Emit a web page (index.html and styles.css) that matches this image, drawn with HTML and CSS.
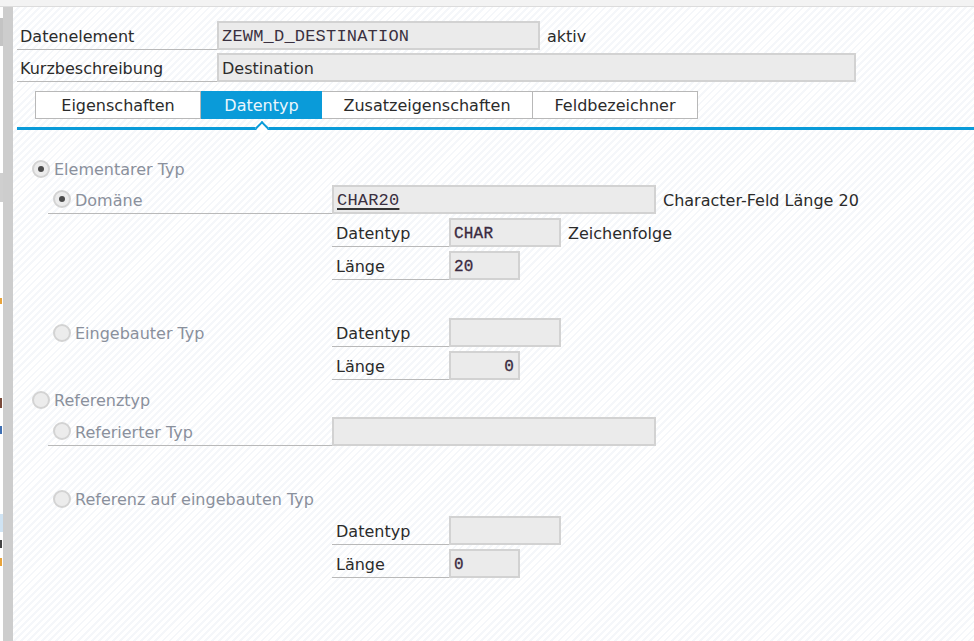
FILE: index.html
```html
<!DOCTYPE html>
<html lang="de">
<head>
<meta charset="utf-8">
<title>Datenelement ZEWM_D_DESTINATION</title>
<link rel="stylesheet" href="styles.css">
</head>
<body>
<div class="topbar"></div>
<div class="page">
  <div class="edge">
    <div class="frags">
      <div class="frag f1"></div>
      <div class="frag f2"></div>
      <div class="frag f3"></div>
      <div class="frag f4"></div>
      <div class="frag f5"></div>
      <div class="frag f6"></div>
      <div class="frag f7"></div>
      <div class="frag f8"></div>
    </div>
    <div class="edgebar"></div>
  </div>
  <main class="main">
    <div class="head">
      <div class="hrow">
        <div class="hlabel">Datenelement</div>
        <div class="field mono w323">ZEWM_D_DESTINATION</div>
        <span class="after">aktiv</span>
      </div>
      <div class="hrow">
        <div class="hlabel">Kurzbeschreibung</div>
        <div class="field w639">Destination</div>
      </div>
    </div>

    <div class="tabs">
      <div class="tab t1">Eigenschaften</div>
      <div class="tab t2 active">Datentyp</div>
      <div class="tab t3">Zusatzeigenschaften</div>
      <div class="tab t4">Feldbezeichner</div>
    </div>
    <div class="tabline"><span class="caret"></span></div>

    <div class="lower">
      <div class="r1 first">
        <span class="radio on"></span><span class="rlabel">Elementarer Typ</span>
      </div>
      <div class="r2 gap2">
        <div class="lead ul"><span class="radio on"></span><span class="rlabel">Domäne</span></div>
        <div class="field mono w324"><span class="link">CHAR20</span></div>
        <span class="after">Character-Feld Länge 20</span>
      </div>
      <div class="sub gap4">
        <div class="slabel">Datentyp</div>
        <div class="field mono w112 small">CHAR</div>
        <span class="after">Zeichenfolge</span>
      </div>
      <div class="sub gap4">
        <div class="slabel">Länge</div>
        <div class="field mono w71 small">20</div>
      </div>

      <div class="r2 gap38">
        <div class="lead"><span class="radio"></span><span class="rlabel">Eingebauter Typ</span></div>
        <div class="slabel">Datentyp</div>
        <div class="field w112"></div>
      </div>
      <div class="sub gap4">
        <div class="slabel">Länge</div>
        <div class="field mono w71 small right">0</div>
      </div>

      <div class="r1 gap5">
        <span class="radio"></span><span class="rlabel">Referenztyp</span>
      </div>
      <div class="r2 gap3">
        <div class="lead ul"><span class="radio"></span><span class="rlabel">Referierter Typ</span></div>
        <div class="field w324"></div>
      </div>

      <div class="r2 gap38">
        <div class="lead"><span class="radio"></span><span class="rlabel">Referenz auf eingebauten Typ</span></div>
      </div>
      <div class="sub gap3">
        <div class="slabel">Datentyp</div>
        <div class="field w112"></div>
      </div>
      <div class="sub gap4">
        <div class="slabel">Länge</div>
        <div class="field mono w71 small">0</div>
      </div>
    </div>
  </main>
</div>
</body>
</html>
```

FILE: styles.css
```css
* { box-sizing: border-box; }

html, body {
  margin: 0;
  padding: 0;
}

body {
  width: 974px;
  height: 641px;
  overflow: hidden;
  font-family: "DejaVu Sans", "Liberation Sans", sans-serif;
  font-size: 16px;
  color: #333;
  background: #fff;
}

.topbar {
  height: 7px;
  background: #f3f3f3;
  border-bottom: 1px solid #dcdcdc;
}

.page {
  display: flex;
  height: 634px;
}

/* left edge: clipped neighbouring panel + splitter */
.edge {
  display: flex;
  width: 13px;
  flex: none;
}

.frags {
  width: 3px;
  background: #fff;
  display: flex;
  flex-direction: column;
}

.frag { width: 3px; flex: none; }
.f1 { margin-top: 11px; height: 28px; background: #c4c4c4; }
.f2 { margin-top: 127px; height: 29px; background: #cfcfcf; }
.f3 { margin-top: 96px; height: 6px; background: #e8a33a; width: 2px; }
.f4 { margin-top: 94px; height: 10px; background: #7a4a3a; width: 2px; }
.f5 { margin-top: 18px; height: 8px; background: #3f6fb3; width: 2px; }
.f6 { margin-top: 80px; height: 18px; background: #cfe3f3; }
.f7 { margin-top: 8px; height: 8px; background: #444; width: 2px; }
.f8 { margin-top: 10px; height: 8px; background: #e8a33a; width: 2px; }

.edgebar {
  width: 10px;
  background: #cdcdcd;
}

.main {
  flex: 1;
  padding-left: 4px;
  background: repeating-linear-gradient(135deg, #ffffff 0 3px, #f5f7fa 3px 5px);
}

/* header */
.head {
  padding-top: 14px;
  display: flex;
  flex-direction: column;
  gap: 3px;
}

.hrow {
  display: flex;
  align-items: center;
  height: 29px;
}

.hlabel {
  width: 200px;
  height: 29px;
  padding: 2px 0 0 3px;
  display: flex;
  align-items: center;
  border-bottom: 1px solid #b9b9b9;
  color: #2b2b2b;
}

.field {
  height: 29px;
  flex: none;
  background: #ebebeb;
  border: 2px solid #d2d2d2;
  display: flex;
  align-items: center;
  padding: 2px 4px 0 3px;
  color: #2d2d2d;
}

.mono {
  font-family: "Liberation Mono", "DejaVu Sans Mono", monospace;
  font-size: 17px;
  letter-spacing: 0.2px;
  color: #3a3040;
}

.mono.small {
  font-size: 16px;
  color: #3a2a40;
  -webkit-text-stroke: 0.3px #3a2a40;
}

.right { justify-content: flex-end; }

.w323 { width: 323px; }
.w639 { width: 639px; }
.w324 { width: 324px; }
.w112 { width: 112px; }
.w71 { width: 71px; }

.after {
  margin-left: 7px;
  padding-top: 2px;
  color: #2b2b2b;
  white-space: nowrap;
}

/* tabs */
.tabs {
  display: flex;
  margin-top: 9px;
  margin-left: 18px;
  height: 28px;
}

.tab {
  height: 28px;
  padding-top: 1px;
  border: 1px solid #b8b8b8;
  background: #fff;
  display: flex;
  align-items: center;
  justify-content: center;
  color: #2b2b2b;
  flex: none;
}

.t1 { width: 166px; }
.t2 { width: 121px; }
.t3 { width: 211px; border-left: none; }
.t4 { width: 165px; border-left: none; }

.tab.active {
  background: #0a9bd9;
  border-color: #0a9bd9;
  color: #e9f6fd;
}

.tabline {
  position: relative;
  margin-top: 8px;
  height: 3px;
  background: #0a9bd9;
}

.caret {
  position: absolute;
  left: 240px;
  top: -4px;
  width: 10px;
  height: 10px;
  background: #fff;
  border-top: 2px solid #0a9bd9;
  border-left: 2px solid #0a9bd9;
  transform: rotate(45deg);
}

/* lower form */
.lower {
  padding-top: 24px;
  display: flex;
  flex-direction: column;
}

.r1 {
  display: flex;
  align-items: center;
  height: 29px;
  padding-left: 15px;
}

.r2 {
  display: flex;
  align-items: center;
  height: 29px;
  margin-left: 31px;
}

.lead {
  width: 284px;
  height: 29px;
  flex: none;
  display: flex;
  align-items: center;
  padding-left: 5px;
}

.ul { border-bottom: 1px solid #b9b9b9; }

.sub {
  display: flex;
  align-items: center;
  height: 29px;
  margin-left: 315px;
}

.slabel {
  width: 117px;
  height: 29px;
  flex: none;
  padding: 2px 0 0 4px;
  display: flex;
  align-items: center;
  border-bottom: 1px solid #b9b9b9;
  color: #2b2b2b;
}

.gap2 { margin-top: 2px; }
.gap3 { margin-top: 3px; }
.gap4 { margin-top: 4px; }
.gap5 { margin-top: 5px; }
.gap38 { margin-top: 38px; }

.radio {
  width: 18px;
  height: 18px;
  flex: none;
  border-radius: 50%;
  border: 2px solid #d3d3d3;
  background: #ececec;
  display: flex;
  align-items: center;
  justify-content: center;
  margin-right: 4px;
}

.radio.on::after {
  content: "";
  width: 6px;
  height: 6px;
  border-radius: 50%;
  background: #4b4b4b;
}

.rlabel {
  padding-top: 2px;
  color: #8a909c;
  white-space: nowrap;
}

.link {
  text-decoration: underline;
  text-decoration-thickness: 2px;
  text-underline-offset: 3px;
  text-decoration-color: #333;
}
```
